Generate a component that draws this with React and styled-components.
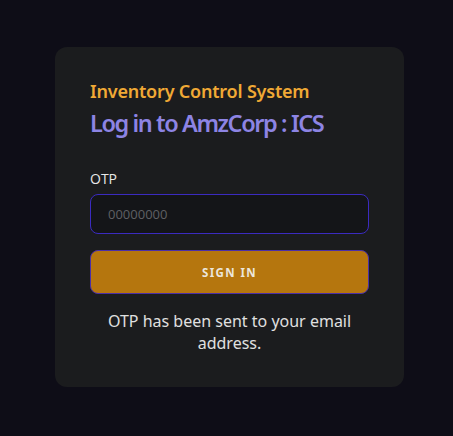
import React from "react";
import styled, { createGlobalStyle } from "styled-components";

const Global = createGlobalStyle`
  html, body { margin: 0; padding: 0; background: #0e0d17; }
  body { font-family: "Noto Sans", sans-serif; }
`;

const Page = styled.div`
  min-height: 436px;
  padding: 47px 0 0 55px;
  box-sizing: border-box;
`;

const Card = styled.div`
  width: 349px;
  height: 340px;
  box-sizing: border-box;
  background: #1b1c1e;
  border-radius: 12px;
  padding: 32px 35px;
  display: flex;
  flex-direction: column;
`;

const Eyebrow = styled.h2`
  margin: 0;
  font-family: "Noto Sans", sans-serif;
  font-weight: 600;
  font-size: 18px;
  line-height: 25px;
  letter-spacing: -0.2px;
  color: #f0a935;
`;

const Title = styled.h1`
  margin: 3px 0 0;
  font-family: "Noto Sans", sans-serif;
  font-weight: 600;
  font-size: 23.5px;
  line-height: 32px;
  letter-spacing: -1.4px;
  color: #8d84e4;
`;

const Label = styled.label`
  margin-top: 30px;
  font-family: "Open Sans", sans-serif;
  font-size: 14px;
  line-height: 19px;
  color: #e8e8e8;
`;

const Input = styled.input`
  margin-top: 6px;
  height: 40px;
  box-sizing: border-box;
  background: #141518;
  border: 1px solid #3b2bc0;
  border-radius: 8px;
  padding: 0 17px;
  font-family: "Open Sans", sans-serif;
  font-size: 13px;
  color: #ddd;
  outline: none;
  &::placeholder { color: #5f6064; }
`;

const Button = styled.button`
  margin-top: 16px;
  height: 44px;
  box-sizing: border-box;
  background: #b5760e;
  border: 1px solid #4b2fa8;
  border-radius: 8px;
  font-family: "Noto Sans", sans-serif;
  font-weight: 700;
  font-size: 11.5px;
  letter-spacing: 1.4px;
  color: #ece6dc;
  cursor: pointer;
`;

const Message = styled.p`
  margin: 16px 0 0;
  text-align: center;
  font-family: "Noto Sans", sans-serif;
  font-size: 16px;
  line-height: 22px;
  color: #e0e0e0;
`;

export default function App() {
  return (
    <>
      <Global />
      <Page>
        <Card>
          <Eyebrow>Inventory Control System</Eyebrow>
          <Title>Log in to AmzCorp : ICS</Title>
          <Label htmlFor="otp">OTP</Label>
          <Input id="otp" placeholder="00000000" />
          <Button>SIGN IN</Button>
          <Message>OTP has been sent to your email address.</Message>
        </Card>
      </Page>
    </>
  );
}
